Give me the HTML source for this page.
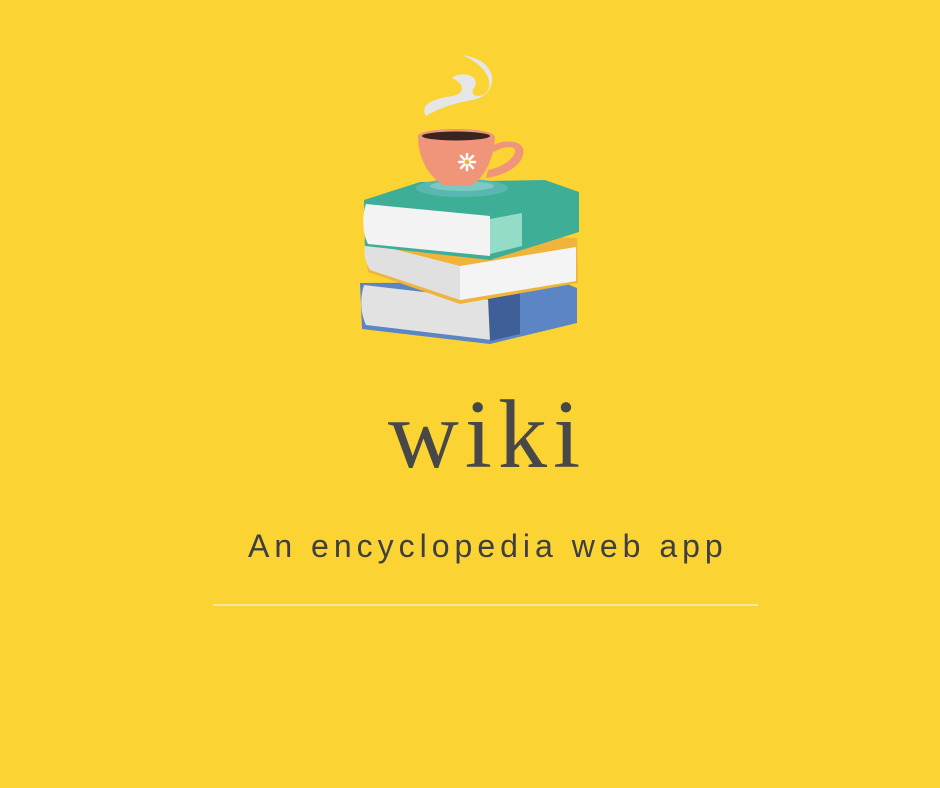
<!DOCTYPE html>
<html><head><style>
html,body{margin:0;padding:0}
body{width:940px;height:788px;background:#fbd333;position:relative;overflow:hidden;font-family:"Liberation Sans",sans-serif}
.wiki{position:absolute;left:388px;top:380px;white-space:nowrap;font-family:"Liberation Serif",serif;font-size:98px;color:#484848;letter-spacing:6px;line-height:110px}
.sub{position:absolute;left:248px;top:526px;white-space:nowrap;font-size:32px;color:#3f3f3f;letter-spacing:5px;line-height:40px}
.line{position:absolute;left:213px;top:604px;width:545px;height:2px;background:#f6e7a4}
svg{position:absolute;left:0;top:0}
</style></head><body>
<svg width="940" height="360" viewBox="0 0 940 360">
<path d="M426 116 C418 102 440 98 452 96 C468 93 462 82 452 78 C462 70 482 76 474 88 C468 96 482 100 488 90 C494 78 480 62 462 55 C485 58 496 72 491 86 C486 100 470 100 462 102 C450 105 440 108 426 116 Z" fill="#e6e6e6"/>
<path d="M360 283 L562 282 L577 288 L577 323 L490 344 L362 329 Z" fill="#5b85c4"/>
<path d="M364 285 L492 300 L492 340 L366 325 C360 312 360 298 364 285 Z" fill="#e2e2e2"/>
<path d="M488 298 L520 292 L520 334 L490 341 Z" fill="#3f5f98"/>
<path d="M364 240 L447 232 L577 238 L578 283 L460 304 L368 272 Z" fill="#f0b43a"/>
<path d="M366 242 L460 266 L460 300 L370 270 C364 260 363 250 366 242 Z" fill="#e0e0e0"/>
<path d="M460 266 L576 247 L576 281 L460 300 Z" fill="#f4f4f4"/>
<path d="M364 200 L420 182 L545 180 L579 192 L579 232 L490 260 L365 246 Z" fill="#3fae96"/>
<path d="M366 204 L490 216 L490 256 L368 244 C362 232 362 216 366 204 Z" fill="#f3f3f3"/>
<path d="M490 219 L522 213 L522 246 L490 254 Z" fill="#93dcc8"/>
<ellipse cx="462" cy="188" rx="46" ry="9" fill="#58b7b0"/>
<ellipse cx="462" cy="186" rx="32" ry="5" fill="#7cc9c4"/>
<path d="M492 146 C505 138 530 140 522 158 C516 170 500 176 486 178 L488 170 C498 168 512 162 515 152 C517 145 503 146 494 152 Z" fill="#f0947a"/>
<path d="M418 136 L495 136 C494 162 482 180 470 186 L445 186 C430 178 418 160 418 136 Z" fill="#f0947a"/>
<ellipse cx="456" cy="136" rx="38" ry="7" fill="#f0947a"/>
<ellipse cx="456" cy="136" rx="34" ry="4.5" fill="#3a2420"/>
<g stroke="#fff" stroke-width="2.5" stroke-linecap="round">
<line x1="467" y1="154" x2="467" y2="170"/><line x1="459" y1="162" x2="475" y2="162"/>
<line x1="461" y1="156" x2="473" y2="168"/><line x1="473" y1="156" x2="461" y2="168"/>
</g>
<circle cx="467" cy="162" r="2.5" fill="#f0b43a"/>
</svg>
<div class="wiki">wiki</div>
<div class="sub">An encyclopedia web app</div>
<div class="line"></div>
</body></html>
